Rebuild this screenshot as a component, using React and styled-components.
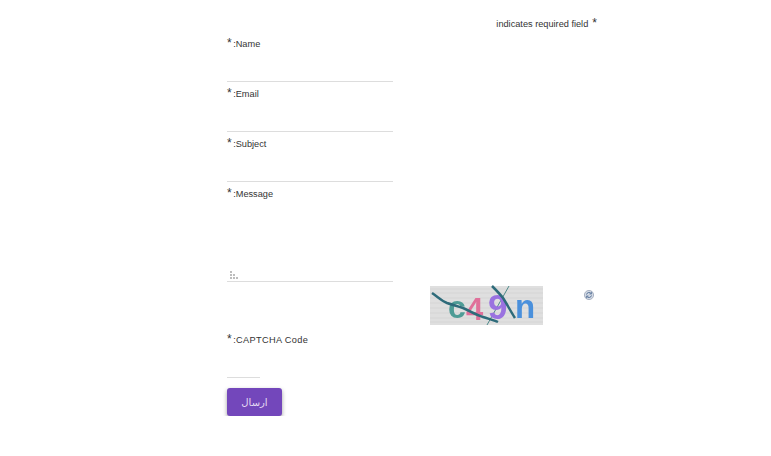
import React from 'react'
import styled, { createGlobalStyle } from 'styled-components'

const Global = createGlobalStyle`
    html, body {
        margin: 0;
        background: #fff;
    }
`

const Page = styled.div`
    width: 370px;
    margin-left: 227px;
    padding-top: 16px;
    font-family: "Liberation Sans", Arial, sans-serif;
    font-size: 9.2px;
    color: #333;
`

const Note = styled.div`
    height: 16px;
    line-height: 17px;
    margin-bottom: 4px;
    text-align: right;
`

const Form = styled.form`
    display: flex;
    flex-direction: column;
`

const Field = styled.div`
    display: flex;
    flex-direction: column;
    margin-bottom: ${(props) => props.gap || 0}px;
`

const Label = styled.label`
    height: 16px;
    line-height: 17px;
    letter-spacing: ${(props) => props.spacing || 0}px;
`

const Star = styled.span`
    font-size: 12px;
    line-height: 10px;
    letter-spacing: 0;
    margin-left: ${(props) => props.before || 0}px;
    margin-right: ${(props) => props.after || 0}px;
`

const Input = styled.input`
    box-sizing: border-box;
    width: ${(props) => props.w || 166}px;
    height: 30px;
    padding: 0;
    border: none;
    border-bottom: 1px solid #ddd;
    outline: none;
    background: transparent;
`

const MessageBox = styled.div`
    position: relative;
    width: 166px;
    height: 80px;
`

const TextArea = styled.textarea`
    display: block;
    box-sizing: border-box;
    width: 100%;
    height: 100%;
    padding: 0;
    border: none;
    border-bottom: 1px solid #ddd;
    outline: none;
    resize: none;
`

const Grip = styled.svg`
    position: absolute;
    left: 1px;
    bottom: 2px;
`

const CaptchaRow = styled.div`
    display: flex;
    align-items: flex-start;
    margin-left: 203px;
    height: 46px;
`

const CaptchaImage = styled.svg`
    display: block;
    overflow: visible;
    filter: blur(0.35px);
`

const Refresh = styled.svg`
    margin: 4px 0 0 41px;
`

const Button = styled.button`
    width: 55px;
    height: 28px;
    margin-top: 10px;
    padding: 0;
    border: none;
    border-radius: 3px;
    background: #7347bb;
    color: #e4daf3;
    font-family: "DejaVu Sans", sans-serif;
    font-size: 10px;
    box-shadow: 0 2px 4px rgba(0, 0, 0, 0.38);
`

const labels = ['Name', 'Email', 'Subject']

const App = () => {
    return (
        <>
            <Global />
            <Page>
                <Note>indicates required field <Star before={1.5}>*</Star></Note>
                <Form>
                    {labels.map((name) => (
                        <Field key={name} gap={4}>
                            <Label><Star after={1.5}>*</Star>:{name}</Label>
                            <Input />
                        </Field>
                    ))}
                    <Field gap={4}>
                        <Label><Star after={1.5}>*</Star>:Message</Label>
                        <MessageBox>
                            <TextArea />
                            <Grip width="11" height="11" viewBox="0 0 11 11" fill="#bdbdbd">
                                <rect x="2" y="2" width="2" height="2" />
                                <rect x="2" y="5" width="2" height="2" />
                                <rect x="5" y="5" width="2" height="2" />
                                <rect x="2" y="8" width="2" height="2" />
                                <rect x="5" y="8" width="2" height="2" />
                                <rect x="8" y="8" width="2" height="2" />
                            </Grip>
                        </MessageBox>
                    </Field>
                    <CaptchaRow>
                        <CaptchaImage width="113" height="39" viewBox="0 0 113 39">
                            <rect width="113" height="39" fill="#dfdfdf" />
                            <path d="M0 3H113M0 7H113M0 12H113M0 17H113M0 22H113M0 27H113M0 32H113M0 36H113" stroke="#d5d5d5" strokeWidth="1" />
                            <path d="M57 39L79 0" stroke="#4f8a8a" strokeWidth="1" />
                            <text x="18" y="32" fontFamily="Liberation Sans" fontWeight="700" fontSize="32" fill="#4e9c96">c</text>
                            <text x="36" y="34" fontFamily="Liberation Sans" fontWeight="700" fontSize="31" fill="#e0709a">4</text>
                            <text x="58" y="33" fontFamily="Liberation Sans" fontWeight="700" fontSize="35" fill="#9a72e0">9</text>
                            <text x="85" y="32" fontFamily="Liberation Sans" fontWeight="700" fontSize="33" fill="#4a90dc">n</text>
                            <path d="M2 7C8 11 12 15 17 17C23 19 27 20 33 22C40 25 46 29 53 31C59 33 64 34 68 36" fill="none" stroke="#2e6b7a" strokeWidth="2.5" />
                            <path d="M62 0C66 4 70 8 73 12C77 18 81 26 85 32" fill="none" stroke="#2e6b7a" strokeWidth="2.5" />
                        </CaptchaImage>
                        <Refresh width="10" height="10" viewBox="0 0 10 10">
                            <circle cx="5" cy="5" r="4.6" fill="#d4dae4" stroke="#9aa5b8" strokeWidth="0.8" />
                            <path d="M2.5 4.5A2.6 2.6 0 0 1 7 3.4M7.5 5.5A2.6 2.6 0 0 1 3 6.6" fill="none" stroke="#45648f" strokeWidth="0.9" />
                            <path d="M7.6 1.8V4H5.4M2.4 8.2V6H4.6" fill="none" stroke="#45648f" strokeWidth="0.7" />
                        </Refresh>
                    </CaptchaRow>
                    <Field>
                        <Label spacing={0.35}><Star after={1.5}>*</Star>:CAPTCHA Code</Label>
                        <Input w={33} />
                    </Field>
                    <Button type="button">ارسال</Button>
                </Form>
            </Page>
        </>
    )
}

export default App
